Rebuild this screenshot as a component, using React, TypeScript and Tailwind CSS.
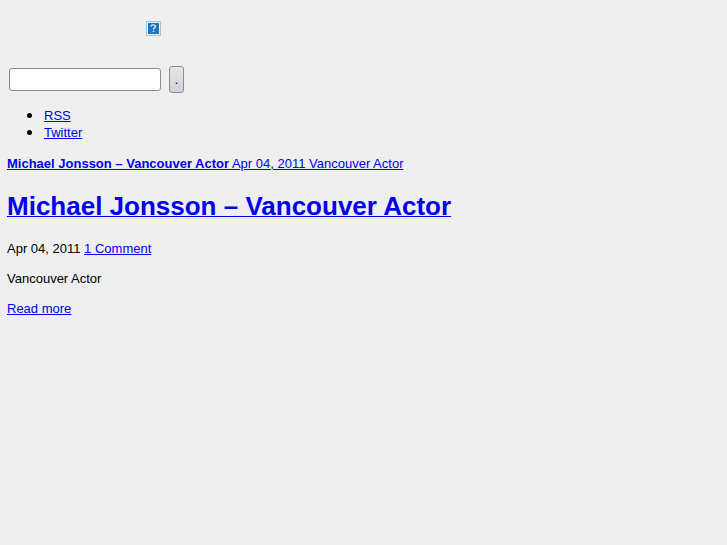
import React from 'react';

const linkStyle = 'text-[#0000ee] underline decoration-1';

const App: React.FC = () => {
  const socialLinks = ['RSS', 'Twitter'];

  return (
    <div className="min-h-screen bg-[#efefef] px-[7px] pt-5 font-['Liberation_Sans',Arial,sans-serif] text-[13px] leading-[17px] text-black">
      <header>
        <a href="#" aria-label="Home" className="ml-[138px] block w-4">
          <svg viewBox="0 0 16 16" className="size-4">
            <rect x="1" y="1" width="15" height="15" fill="#a9c5dd" />
            <rect x="2" y="2" width="13" height="13" fill="#edf4fa" />
            <rect x="3" y="3" width="11" height="11" fill="#2377bd" />
            <path d="M6.3 6.6V5.6C7 4.5 10.4 4.6 10.4 6.4C10.4 7.8 8.5 7.8 8.5 9.5M8.5 10.8V12" fill="none" stroke="#dcebf7" strokeWidth="1.4" />
          </svg>
        </a>

        <form className="mt-[30px] flex items-center gap-2" onSubmit={(e) => e.preventDefault()}>
          <input
            type="text"
            aria-label="Search"
            className="ml-0.5 h-[23px] w-[152px] rounded-[3px] border border-[#8c8c8c] bg-white px-1 outline-none"
          />
          <button type="submit" className="h-[27px] w-[15px] rounded-[3px] border border-[#8c8c94] bg-linear-to-b from-[#e6e6ea] to-[#cfcfd6] text-center">
            .
          </button>
        </form>

        <ul className="mt-3.5 list-disc pl-[37px] marker:text-lg marker:leading-3">
          {socialLinks.map((name) => (
            <li key={name}>
              <a href="#" className={linkStyle}>{name}</a>
            </li>
          ))}
        </ul>
      </header>

      <main className="mt-3.5">
        <a href="#" className={linkStyle}>
          <strong>Michael Jonsson – Vancouver Actor</strong> Apr 04, 2011 Vancouver Actor
        </a>
        <h1 className="mt-[18px] text-[26px] leading-8 font-bold">
          <a href="#" className={linkStyle}>Michael Jonsson – Vancouver Actor</a>
        </h1>
        <p className="mt-[18px]">
          Apr 04, 2011 <a href="#" className={linkStyle}>1 Comment</a>
        </p>
        <p className="mt-[13px]">Vancouver Actor</p>
        <p className="mt-[13px]">
          <a href="#" className={linkStyle}>Read more</a>
        </p>
      </main>
    </div>
  );
};

export default App;
